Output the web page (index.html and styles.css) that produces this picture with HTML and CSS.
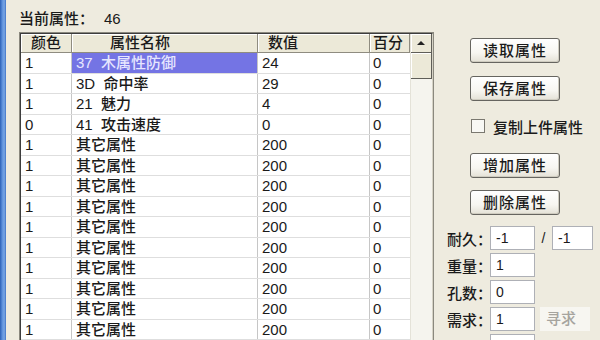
FILE: index.html
```html
<!DOCTYPE html>
<html lang="zh-CN">
<head>
<meta charset="utf-8">
<title>属性编辑</title>
<link rel="stylesheet" href="styles.css">
</head>
<body>
<div class="window">
  <div class="edge"></div>
  <div class="main">
    <div class="count"><span>当前属性：</span><span class="num">46</span></div>
    <div class="list">
      <div class="list-inner">
        <div class="grid">
          <div class="hdr">
            <div class="hc h1">颜色</div>
            <div class="hc h2">属性名称</div>
            <div class="hc h3">数值</div>
            <div class="hc h4">百分</div>
          </div>
          <div class="row"><div class="c c1">1</div><div class="c c2 sel">37&nbsp;&nbsp;木属性防御</div><div class="c c3">24</div><div class="c c4">0</div></div>
          <div class="row"><div class="c c1">1</div><div class="c c2">3D&nbsp;&nbsp;命中率</div><div class="c c3">29</div><div class="c c4">0</div></div>
          <div class="row"><div class="c c1">1</div><div class="c c2">21&nbsp;&nbsp;魅力</div><div class="c c3">4</div><div class="c c4">0</div></div>
          <div class="row"><div class="c c1">0</div><div class="c c2">41&nbsp;&nbsp;攻击速度</div><div class="c c3">0</div><div class="c c4">0</div></div>
          <div class="row"><div class="c c1">1</div><div class="c c2">其它属性</div><div class="c c3">200</div><div class="c c4">0</div></div>
          <div class="row"><div class="c c1">1</div><div class="c c2">其它属性</div><div class="c c3">200</div><div class="c c4">0</div></div>
          <div class="row"><div class="c c1">1</div><div class="c c2">其它属性</div><div class="c c3">200</div><div class="c c4">0</div></div>
          <div class="row"><div class="c c1">1</div><div class="c c2">其它属性</div><div class="c c3">200</div><div class="c c4">0</div></div>
          <div class="row"><div class="c c1">1</div><div class="c c2">其它属性</div><div class="c c3">200</div><div class="c c4">0</div></div>
          <div class="row"><div class="c c1">1</div><div class="c c2">其它属性</div><div class="c c3">200</div><div class="c c4">0</div></div>
          <div class="row"><div class="c c1">1</div><div class="c c2">其它属性</div><div class="c c3">200</div><div class="c c4">0</div></div>
          <div class="row"><div class="c c1">1</div><div class="c c2">其它属性</div><div class="c c3">200</div><div class="c c4">0</div></div>
          <div class="row"><div class="c c1">1</div><div class="c c2">其它属性</div><div class="c c3">200</div><div class="c c4">0</div></div>
          <div class="row"><div class="c c1">1</div><div class="c c2">其它属性</div><div class="c c3">200</div><div class="c c4">0</div></div>
          <div class="row"><div class="c c1">1</div><div class="c c2">其它属性</div><div class="c c3">200</div><div class="c c4">0</div></div>
        </div>
        <div class="vscroll">
          <div class="sbtn"><svg width="8" height="5" viewBox="0 0 8 5"><path d="M4 0 L8 4 L0 4 Z" fill="#222"/></svg></div>
          <div class="thumb"></div>
          <div class="track"></div>
        </div>
      </div>
    </div>
  </div>
  <div class="side">
    <div class="btn b1">读取属性</div>
    <div class="btn b2">保存属性</div>
    <label class="chk"><span class="box"></span><span>复制上件属性</span></label>
    <div class="btn b3">增加属性</div>
    <div class="btn b4">删除属性</div>
    <div class="form">
      <div class="frow"><span class="lbl">耐久：</span><span class="inp">-1</span><span class="slash">/</span><span class="inp inp2">-1</span></div>
      <div class="frow"><span class="lbl">重量：</span><span class="inp">1</span></div>
      <div class="frow"><span class="lbl">孔数：</span><span class="inp">0</span></div>
      <div class="frow"><span class="lbl">需求：</span><span class="inp">1</span><span class="ghost">寻求</span></div>
      <div class="frow"><span class="lbl faint">等级：</span><span class="inp">0</span></div>
    </div>
  </div>
</div>
</body>
</html>
```

FILE: styles.css
```css
html, body {
  margin: 0;
  padding: 0;
}
body {
  width: 600px;
  height: 340px;
  overflow: hidden;
  background: #eeebdf;
  font-family: "Liberation Sans", "Noto Sans CJK SC", sans-serif;
  font-size: 15px;
  font-weight: 500;
  color: #1a1a1a;
}
.window {
  display: flex;
  height: 340px;
  overflow: hidden;
  background: #eeebdf;
}
.edge {
  width: 6px;
  flex: none;
  background: linear-gradient(90deg, #2b5fb6 0, #5f92dc 40%, #7aa6e4 70%, #3f73c6 100%);
}
.main {
  width: 415px;
  flex: none;
  padding: 11px 0 0 13px;
  display: flex;
  flex-direction: column;
}
.count {
  height: 16px;
  line-height: 16px;
  margin-bottom: 5px;
  white-space: nowrap;
}
.count .num {
  margin-left: 10px;
}
.list {
  border: 1px solid #8a887e;
  flex: 1;
  display: flex;
}
.list-inner {
  flex: 1;
  display: flex;
  border-top: 1px solid #3d3d3d;
  border-left: 1px solid #3d3d3d;
  border-right: 1px solid #d6d3c6;
  background: #fff;
}
.grid {
  width: 389px;
  flex: none;
  display: flex;
  flex-direction: column;
}
.hdr {
  display: flex;
  height: 19px;
  flex: none;
}
.hc {
  box-sizing: border-box;
  height: 19px;
  line-height: 18px;
  background: #ece9d8;
  border-right: 1px solid #8f8c80;
  border-bottom: 1px solid #8f8c80;
  box-shadow: inset 1px 1px 0 #fff;
  white-space: nowrap;
  overflow: hidden;
}
.h1 { width: 51px; text-align: center; }
.h2 { width: 186px; padding-left: 38px; }
.h3 { width: 112px; padding-left: 10px; }
.h4 { width: 40px; padding-left: 3px; }
.row {
  display: flex;
  height: 20.5px;
  flex: none;
  box-sizing: border-box;
  border-bottom: 1px solid #dedede;
}
.c {
  box-sizing: border-box;
  height: 100%;
  line-height: 19px;
  white-space: nowrap;
  overflow: hidden;
  border-right: 1px solid #c6c6c6;
}
.c1 { width: 51px; padding-left: 4px; }
.c2 { width: 186px; padding-left: 4px; }
.c3 { width: 112px; padding-left: 4px; }
.c4 { width: 40px; padding-left: 3px; border-right: none; }
.c2.sel {
  background: #7474e4;
  color: #e6e6ff;
}
.vscroll {
  width: 22px;
  flex: none;
  display: flex;
  flex-direction: column;
  border-left: 1px solid #e4e2d8;
  box-sizing: border-box;
}
.sbtn {
  height: 19px;
  flex: none;
  box-sizing: border-box;
  background: #ece9d8;
  border-right: 1px solid #5f5e58;
  border-bottom: 1px solid #5f5e58;
  box-shadow: inset 1px 1px 0 #fff;
  display: flex;
  align-items: center;
  justify-content: center;
}
.thumb {
  height: 26px;
  flex: none;
  box-sizing: border-box;
  background: #ece9d8;
  border-right: 1px solid #5f5e58;
  border-bottom: 1px solid #5f5e58;
  box-shadow: inset 1px 1px 0 #fff;
}
.track {
  flex: 1;
  background: #f5f4ee;
}
.side {
  flex: 1;
  padding: 38px 0 0 13px;
  display: flex;
  flex-direction: column;
  align-items: flex-start;
}
.btn {
  width: 90px;
  height: 25px;
  box-sizing: border-box;
  margin-left: 23px;
  border: 1px solid #666560;
  border-radius: 3px;
  background: linear-gradient(#ffffff, #f7f6f1 60%, #e4e1d6);
  box-shadow: inset -1px -1px 0 #cfccc0;
  text-align: center;
  line-height: 23px;
  letter-spacing: 1px;
  white-space: nowrap;
}
.b1 { margin-bottom: 13px; }
.b2 { margin-bottom: 16px; }
.chk {
  display: flex;
  align-items: center;
  height: 18px;
  margin-left: 24px;
  margin-bottom: 18px;
  white-space: nowrap;
}
.chk .box {
  width: 14px;
  height: 14px;
  box-sizing: border-box;
  border: 1px solid #7a7870;
  background: #f8f8f4;
  margin-right: 8px;
}
.b3 { margin-bottom: 12px; }
.b4 { margin-bottom: 11px; }
.form {
  display: flex;
  flex-direction: column;
  gap: 3px;
}
.frow {
  display: flex;
  align-items: center;
  height: 24px;
}
.lbl {
  width: 43px;
  flex: none;
  white-space: nowrap;
  overflow: visible;
}
.faint {
  color: #b8b6ac;
}
.inp {
  width: 45px;
  height: 24px;
  flex: none;
  box-sizing: border-box;
  border: 1px solid #aeb0b6;
  background: #fff;
  padding-left: 5px;
  line-height: 22px;
  font-size: 14px;
}
.inp2 {
  width: 41px;
}
.slash {
  width: 17px;
  text-align: center;
  font-size: 14px;
}
.ghost {
  margin-left: 5px;
  width: 50px;
  height: 24px;
  line-height: 24px;
  background: #f7f6f1;
  color: #a6a49e;
  padding-left: 6px;
  box-sizing: border-box;
}
```
